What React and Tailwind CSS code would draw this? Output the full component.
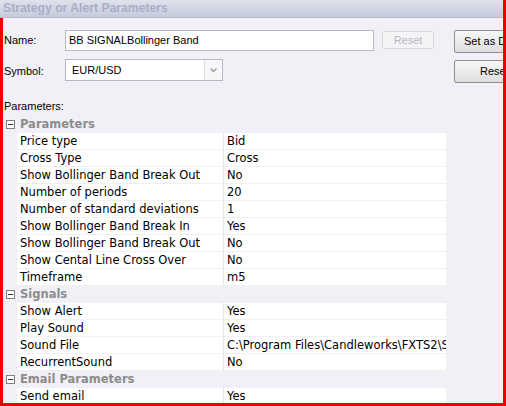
import React from 'react';

const sections = [
  {
    title: 'Parameters',
    rows: [
      ['Price type', 'Bid'],
      ['Cross Type', 'Cross'],
      ['Show Bollinger Band Break Out', 'No'],
      ['Number of periods', '20'],
      ['Number of standard deviations', '1'],
      ['Show Bollinger Band Break In', 'Yes'],
      ['Show Bollinger Band Break Out', 'No'],
      ['Show Cental Line Cross Over', 'No'],
      ['Timeframe', 'm5'],
    ],
  },
  {
    title: 'Signals',
    rows: [
      ['Show Alert', 'Yes'],
      ['Play Sound', 'Yes'],
      ['Sound File', 'C:\\Program Files\\Candleworks\\FXTS2\\Sounds\\alert.wav'],
      ['RecurrentSound', 'No'],
    ],
  },
  {
    title: 'Email Parameters',
    rows: [['Send email', 'Yes']],
  },
];

function Collapse() {
  return (
    <div className="w-[9px] h-[9px] border border-[#808080] bg-white flex items-center justify-center">
      <div className="w-[5px] h-px bg-[#333]" />
    </div>
  );
}

function Button({ children, disabled, className = '' }) {
  return (
    <div
      className={`flex items-center shrink-0 border rounded-[2px] whitespace-nowrap ${
        disabled
          ? 'justify-center border-[#d8d8de] bg-[#f4f4f6] text-[#b8b8c0]'
          : 'border-[#8e8f8f] bg-gradient-to-b from-[#f8f8f8] to-[#dedede] text-black'
      } ${className}`}
    >
      {children}
    </div>
  );
}

export default function App() {
  return (
    <div className="w-[506px] h-[406px] overflow-hidden flex flex-col bg-[#f0f0f6] border-r-[3px] border-[#ee0000] font-['Liberation_Sans',sans-serif] text-[11px] text-black">
      {/* Title */}
      <div className="h-[18px] shrink-0 bg-gradient-to-b from-[#dfe2ec] to-[#c6cbdc] border-b border-[#b7bccd] flex items-center pl-[3px]">
        <span className="font-bold text-[12.2px] text-[#a9afc6]">
          Strategy or Alert Parameters
        </span>
      </div>

      <div className="flex-1 min-h-0 border-l-[3px] border-b-[3px] border-[#ee0000] overflow-hidden flex flex-col">
        {/* Name */}
        <div className="flex items-start pt-[12px] h-[41px] shrink-0">
          <div className="w-[62px] shrink-0 pl-[1px] pt-[2px]">Name:</div>
          <div className="w-[309px] h-[21px] shrink-0 bg-white border border-[#b5b8c8] flex items-center pl-[3px] text-[11px]">
            BB SIGNALBollinger Band
          </div>
          <Button disabled className="ml-[8px] mt-[1px] w-[52px] h-[18px]">
            Reset
          </Button>
          <Button className="ml-[20px] w-[60px] h-[23px] text-[11px] pl-[9px]">
            Set as Default
          </Button>
        </div>

        {/* Symbol */}
        <div className="flex items-start h-[40px] shrink-0">
          <div className="w-[62px] shrink-0 pl-[1px] pt-[4px]">Symbol:</div>
          <div className="w-[158px] h-[22px] shrink-0 bg-white border border-[#b5b8c8] flex items-center text-[11px]">
            <div className="flex-1 pl-[6px]">EUR/USD</div>
            <div className="w-[18px] h-full border-l border-[#dcdde3] bg-[#f7f7f9] flex items-center justify-center">
              <svg width="7" height="5" viewBox="0 0 7 5">
                <path d="M0.5 0.5 L3.5 3.5 L6.5 0.5" fill="none" stroke="#9a9aa2" strokeWidth="1.4" />
              </svg>
            </div>
          </div>
          <Button className="ml-[231px] mt-[1px] w-[60px] h-[23px] text-[11px] pl-[25px]">
            Reset
          </Button>
        </div>

        <div className="h-[16px] shrink-0 pl-[1px] leading-[14px]">Parameters:</div>

        {/* Property grid */}
        <div className="font-['DejaVu_Sans',sans-serif] text-[11.5px] pt-px">
          {sections.map((s) => (
            <div key={s.title}>
              <div className="flex items-center h-[17px]">
                <div className="w-[14px] flex justify-center pl-[1px]">
                  <Collapse />
                </div>
                <div className="pl-[3px] font-bold text-[#8c8c8c]">{s.title}</div>
              </div>
              {s.rows.map(([k, v], i) => (
                <div key={i} className="flex h-[17px]">
                  <div className="w-[14px] shrink-0" />
                  <div className="w-[207px] shrink-0 bg-white border-b border-[#f1f1f1] border-r border-r-[#e6e6e6] pl-[3px] leading-[16px] whitespace-nowrap overflow-hidden">
                    {k}
                  </div>
                  <div className="w-[222px] shrink-0 bg-white border-b border-[#f1f1f1] pl-[3px] leading-[16px] whitespace-nowrap overflow-hidden">
                    {v}
                  </div>
                </div>
              ))}
            </div>
          ))}
        </div>
      </div>
    </div>
  );
}
